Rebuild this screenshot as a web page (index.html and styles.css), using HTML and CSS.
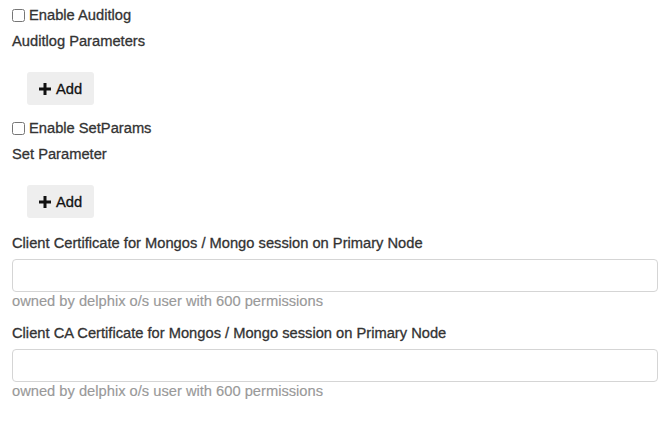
FILE: index.html
```html
<!DOCTYPE html>
<html>
<head>
<meta charset="utf-8">
<link rel="stylesheet" href="styles.css">
</head>
<body>
<div class="form">
  <div class="section">
    <label class="check"><input type="checkbox" class="box"> Enable Auditlog</label>
    <div class="group-label">Auditlog Parameters</div>
    <button class="add-btn"><svg class="plus" width="12" height="12" viewBox="0 0 12 12"><rect x="4.5" y="0" width="3" height="12" fill="#111"/><rect x="0" y="4.5" width="12" height="3" fill="#111"/></svg>Add</button>
  </div>
  <div class="section">
    <label class="check"><input type="checkbox" class="box"> Enable SetParams</label>
    <div class="group-label">Set Parameter</div>
    <button class="add-btn"><svg class="plus" width="12" height="12" viewBox="0 0 12 12"><rect x="4.5" y="0" width="3" height="12" fill="#111"/><rect x="0" y="4.5" width="12" height="3" fill="#111"/></svg>Add</button>
  </div>
  <div class="field">
    <div class="field-label">Client Certificate for Mongos / Mongo session on Primary Node</div>
    <input type="text" class="text-input">
    <div class="help">owned by delphix o/s user with 600 permissions</div>
  </div>
  <div class="field">
    <div class="field-label">Client CA Certificate for Mongos / Mongo session on Primary Node</div>
    <input type="text" class="text-input">
    <div class="help">owned by delphix o/s user with 600 permissions</div>
  </div>
</div>
</body>
</html>
```

FILE: styles.css
```css
html, body {
  margin: 0;
  padding: 0;
  background: #fff;
}
body {
  font-family: "Liberation Sans", Arial, sans-serif;
  font-size: 14.7px;
  color: #333;
}
.form {
  padding: 5px 14px 0 12px;
  display: flex;
  flex-direction: column;
}
.section {
  display: flex;
  flex-direction: column;
  align-items: flex-start;
  margin-bottom: 13px;
}
.check {
  display: flex;
  align-items: center;
  height: 20px;
  color: #333;
  -webkit-text-stroke: 0.3px #333;
}
.box {
  width: 13px;
  height: 13px;
  margin: 0 4px 0 0;
}
.group-label {
  margin-top: 6px;
  height: 20px;
  line-height: 20px;
  -webkit-text-stroke: 0.3px #333;
}
.add-btn {
  margin: 21px 0 0 15px;
  width: 67px;
  height: 33px;
  border: none;
  border-radius: 3px;
  background: #eeeeee;
  font-family: "Liberation Sans", Arial, sans-serif;
  font-size: 14.7px;
  color: #111;
  -webkit-text-stroke: 0.3px #111;
  display: flex;
  align-items: center;
  justify-content: center;
  gap: 5px;
  padding: 0;
}
.plus {
  display: block;
}
.field {
  display: flex;
  flex-direction: column;
  margin-top: 2px;
}
.field + .field {
  margin-top: 14px;
}
.field-label {
  height: 20px;
  line-height: 20px;
  -webkit-text-stroke: 0.3px #333;
}
.text-input {
  margin-top: 6px;
  height: 33px;
  box-sizing: border-box;
  border: 1px solid #d5d5d5;
  border-radius: 4px;
  background: #fff;
  width: 100%;
}
.help {
  margin-top: 1px;
  height: 16px;
  line-height: 16px;
  color: #999;
  -webkit-text-stroke: 0.15px #999;
}
```
